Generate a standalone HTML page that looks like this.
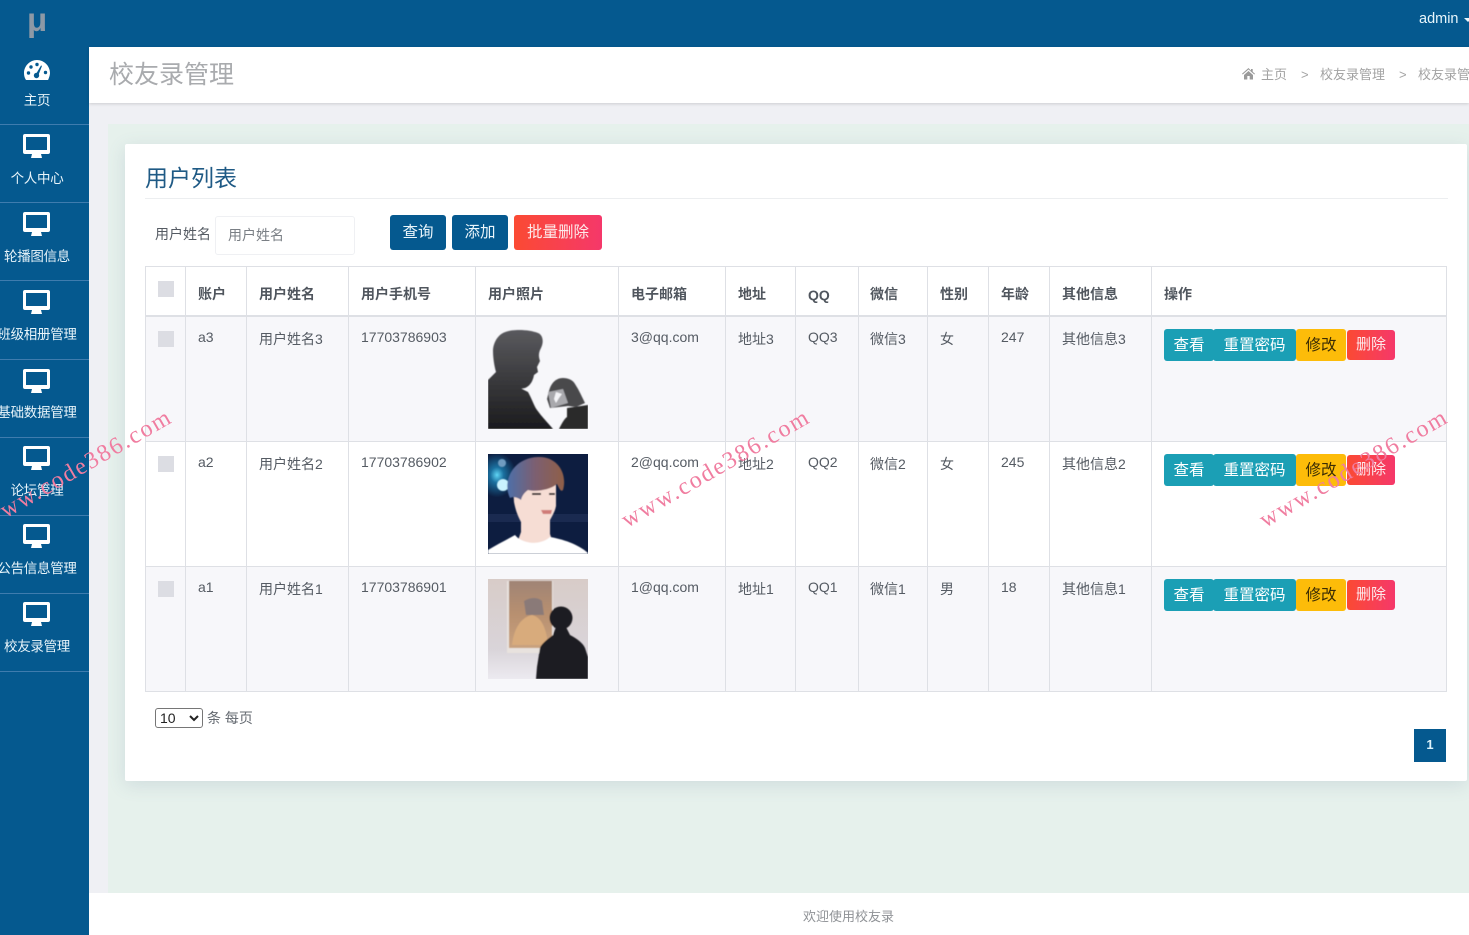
<!DOCTYPE html>
<html lang="zh"><head><meta charset="utf-8"><title>校友录管理</title>
<style>
html,body{margin:0;padding:0;width:1469px;height:935px;overflow:hidden;background:#eff0f4}
body{position:relative;font-family:"Liberation Sans","Noto Sans CJK SC",sans-serif;font-size:14px;color:#555b63}
div,span,svg,select{position:absolute}
.t{white-space:nowrap;line-height:20px}
.m{left:-20px;width:114px;margin-top:1px;text-align:center;color:#e8f4fa;font-size:13.5px;line-height:20px;white-space:nowrap;letter-spacing:-.3px}
.m span{position:static}
.sep{left:0;width:89px;height:1px;background:#3f7cae}
.mon{left:23px;width:28px;height:28px}
.v{width:1px;background:#dee0e5;top:266px;height:426px}
.h{left:145px;width:1302px;background:#dee0e5;height:1px}
.bg{left:146px;width:1300px;height:124px;background:#f7f7fa}
.th{top:284px;font-weight:bold;color:#50565e;font-size:14px;line-height:20px;white-space:nowrap}
.cb{left:158px;width:16px;height:16px;background:#dcdde3}
.btn{height:32px;line-height:33px;text-align:center;border-radius:3px;font-size:15.5px}
.b1{left:1164px;width:50px;background:#1b9fb5;color:#fff}
.b2{left:1213px;width:83px;background:#1b9fb5;color:#fff}
.b3{left:1296px;width:50px;background:#fdbc09;color:#3a2c05}
.b4{left:1347px;width:48px;height:30px;line-height:30px;font-size:15px;background:linear-gradient(90deg,#fb4a33,#f5386a);color:#fde9ec}
.wm{font-family:"Liberation Serif",serif;font-size:24px;letter-spacing:1.9px;color:#f07da0;line-height:30px;white-space:nowrap;transform:rotate(-30deg);transform-origin:0 100%}
</style></head><body>
<div style="left:0;top:0;width:1469px;height:47px;background:#05598f"></div>
<div style="left:0;top:0;width:89px;height:935px;background:#05598f"></div>
<div class="t" style="left:27px;top:1px;font-size:33px;line-height:38px;font-weight:bold;color:#8d99a6">μ</div>
<div class="t" style="left:1419px;top:9px;color:#e8f6fc;font-size:14.5px">admin</div>
<div style="left:1464px;top:18px;width:0;height:0;border:4px solid transparent;border-top:4px solid #e8f6fc;border-bottom:0"></div>

<svg style="left:23px;top:59px" width="28" height="22" viewBox="0 0 28 22"><path fill="#fff" d="M14 1C7 1 1 7 1 14c0 2.500.6 4.700 1.600 6.400.2.400.6.600 1 .600h20.800c.4 0 .8-.2 1-.6C25.900 18.700 27 16.500 27 14 27 7 21 1 14 1z"/><g fill="#05598f"><circle cx="5.500" cy="14" r="1.700"/><circle cx="8" cy="8" r="1.700"/><circle cx="14" cy="5.500" r="1.700"/><circle cx="22.500" cy="13.500" r="1.700"/><circle cx="13.500" cy="16.500" r="2.700"/><path d="M13 15l5-8.500 1 .4-3.500 9z"/></g></svg>
<div class="m" style="top:90px"><span>主页</span></div><div class="sep" style="top:124px"></div>

<svg class="mon" style="top:133px" viewBox="0 0 28 28"><path fill="#fff" d="M2 1h23a2 2 0 0 1 2 2v16a2 2 0 0 1-2 2H18l1 4H8l1-4H2a2 2 0 0 1-2-2V3a2 2 0 0 1 2-2zm1 3v13h21V4z"/></svg>
<div class="m" style="top:168px"><span>个人中心</span></div><div class="sep" style="top:202px"></div>

<svg class="mon" style="top:211px" viewBox="0 0 28 28"><path fill="#fff" d="M2 1h23a2 2 0 0 1 2 2v16a2 2 0 0 1-2 2H18l1 4H8l1-4H2a2 2 0 0 1-2-2V3a2 2 0 0 1 2-2zm1 3v13h21V4z"/></svg>
<div class="m" style="top:246px"><span>轮播图信息</span></div><div class="sep" style="top:280px"></div>

<svg class="mon" style="top:289px" viewBox="0 0 28 28"><path fill="#fff" d="M2 1h23a2 2 0 0 1 2 2v16a2 2 0 0 1-2 2H18l1 4H8l1-4H2a2 2 0 0 1-2-2V3a2 2 0 0 1 2-2zm1 3v13h21V4z"/></svg>
<div class="m" style="top:324px"><span>班级相册管理</span></div><div class="sep" style="top:359px"></div>

<svg class="mon" style="top:368px" viewBox="0 0 28 28"><path fill="#fff" d="M2 1h23a2 2 0 0 1 2 2v16a2 2 0 0 1-2 2H18l1 4H8l1-4H2a2 2 0 0 1-2-2V3a2 2 0 0 1 2-2zm1 3v13h21V4z"/></svg>
<div class="m" style="top:402px"><span>基础数据管理</span></div><div class="sep" style="top:437px"></div>

<svg class="mon" style="top:445px" viewBox="0 0 28 28"><path fill="#fff" d="M2 1h23a2 2 0 0 1 2 2v16a2 2 0 0 1-2 2H18l1 4H8l1-4H2a2 2 0 0 1-2-2V3a2 2 0 0 1 2-2zm1 3v13h21V4z"/></svg>
<div class="m" style="top:480px"><span>论坛管理</span></div><div class="sep" style="top:515px"></div>

<svg class="mon" style="top:523px" viewBox="0 0 28 28"><path fill="#fff" d="M2 1h23a2 2 0 0 1 2 2v16a2 2 0 0 1-2 2H18l1 4H8l1-4H2a2 2 0 0 1-2-2V3a2 2 0 0 1 2-2zm1 3v13h21V4z"/></svg>
<div class="m" style="top:558px"><span>公告信息管理</span></div><div class="sep" style="top:593px"></div>

<svg class="mon" style="top:601px" viewBox="0 0 28 28"><path fill="#fff" d="M2 1h23a2 2 0 0 1 2 2v16a2 2 0 0 1-2 2H18l1 4H8l1-4H2a2 2 0 0 1-2-2V3a2 2 0 0 1 2-2zm1 3v13h21V4z"/></svg>
<div class="m" style="top:636px"><span>校友录管理</span></div><div class="sep" style="top:671px"></div>

<div style="left:89px;top:47px;width:1380px;height:56px;background:#fff;box-shadow:0 1px 3px rgba(0,0,0,.15)"></div>
<div class="t" style="left:109px;top:59px;font-size:25px;line-height:32px;color:#a9abae">校友录管理</div>
<svg style="left:1242px;top:68px" width="13" height="12" viewBox="0 0 13 12"><path fill="#9a9a9a" d="M6.500 0L0 5.700l.7.800L6.500 1.500l5.800 5 .7-.8-2.300-2V1H9v1.600zM2 7v4.500h3.300V8h2.400v3.500H11V7L6.500 3z"/></svg>
<div class="t" style="left:1261px;top:65px;font-size:13px;color:#a3a3a3">主页</div>
<div class="t" style="left:1301px;top:65px;font-size:13px;color:#a3a3a3">&gt;</div>
<div class="t" style="left:1320px;top:65px;font-size:13px;color:#a3a3a3">校友录管理</div>
<div class="t" style="left:1399px;top:65px;font-size:13px;color:#a3a3a3">&gt;</div>
<div class="t" style="left:1418px;top:65px;font-size:13px;color:#a3a3a3">校友录管理</div>

<div style="left:108px;top:124px;width:1361px;height:769px;background:#e6f1ec"></div>
<div style="left:89px;top:893px;width:1380px;height:42px;background:#fff"></div>
<div class="t" style="left:803px;top:907px;font-size:13px;color:#8f9296">欢迎使用校友录</div>

<div style="left:125px;top:144px;width:1342px;height:637px;background:#fff;border-radius:2px;box-shadow:0 4px 18px rgba(90,110,150,.16)"></div>
<div class="t" style="left:145px;top:163px;font-size:23px;line-height:30px;color:#1f5a85">用户列表</div>
<div style="left:145px;top:198px;width:1303px;height:1px;background:#eceef0"></div>
<div class="t" style="left:155px;top:224px;color:#555b63">用户姓名</div>
<div style="left:215px;top:216px;width:138px;height:37px;border:1px solid #eff0f3;border-radius:3px"></div>
<div class="t" style="left:228px;top:225px;color:#7a7f85">用户姓名</div>
<div class="btn" style="left:390px;top:215px;width:56px;height:35px;line-height:35px;background:#05598f;color:#eaf5fb">查询</div>
<div class="btn" style="left:452px;top:215px;width:56px;height:35px;line-height:35px;background:#05598f;color:#eaf5fb">添加</div>
<div class="btn" style="left:514px;top:215px;width:88px;height:35px;line-height:35px;background:linear-gradient(90deg,#fb4a33,#f5386a);color:#fdeaea">批量删除</div>

<div class="bg" style="top:317px"></div>
<div class="bg" style="top:567px"></div>
<div class="h" style="top:266px"></div>
<div class="h" style="top:315px;height:2px"></div>
<div class="h" style="top:441px"></div>
<div class="h" style="top:566px"></div>
<div class="h" style="top:691px"></div>
<div class="v" style="left:145px"></div><div class="v" style="left:185px"></div><div class="v" style="left:246px"></div><div class="v" style="left:348px"></div><div class="v" style="left:475px"></div><div class="v" style="left:618px"></div><div class="v" style="left:725px"></div><div class="v" style="left:795px"></div><div class="v" style="left:858px"></div><div class="v" style="left:927px"></div><div class="v" style="left:988px"></div><div class="v" style="left:1049px"></div><div class="v" style="left:1151px"></div><div class="v" style="left:1446px"></div>

<div class="cb" style="top:281px"></div>
<div class="th" style="left:198px">账户</div><div class="th" style="left:259px">用户姓名</div><div class="th" style="left:361px">用户手机号</div><div class="th" style="left:488px">用户照片</div><div class="th" style="left:631px">电子邮箱</div><div class="th" style="left:738px">地址</div><div class="th" style="left:808px;top:285px">QQ</div><div class="th" style="left:870px">微信</div><div class="th" style="left:940px">性别</div><div class="th" style="left:1001px">年龄</div><div class="th" style="left:1062px">其他信息</div><div class="th" style="left:1164px">操作</div>

<!-- row 1 -->
<div class="cb" style="top:331px"></div>
<div class="t" style="left:198px;top:327px">a3</div><div class="t" style="left:259px;top:329px">用户姓名3</div><div class="t" style="left:361px;top:327px">17703786903</div><div class="t" style="left:631px;top:327px">3@qq.com</div><div class="t" style="left:738px;top:329px">地址3</div><div class="t" style="left:808px;top:327px">QQ3</div><div class="t" style="left:870px;top:329px">微信3</div><div class="t" style="left:940px;top:329px">女</div><div class="t" style="left:1001px;top:327px">247</div><div class="t" style="left:1062px;top:329px">其他信息3</div>
<div class="btn b1" style="top:329px">查看</div><div class="btn b2" style="top:329px">重置密码</div><div class="btn b3" style="top:329px">修改</div><div class="btn b4" style="top:330px">删除</div>
<svg style="left:488px;top:329px" width="100" height="100" viewBox="0 0 100 100"><defs><linearGradient id="g1" x1="0" y1="0" x2="0" y2="1"><stop offset="0" stop-color="#5a5a5e"/><stop offset=".5" stop-color="#3a3a3d"/><stop offset="1" stop-color="#1c1c1e"/></linearGradient><filter id="s"><feGaussianBlur stdDeviation=".6"/></filter></defs><rect width="100" height="100" fill="#f7f7fa"/><g filter="url(#s)"><path fill="url(#g1)" d="M0 100V51L8 43C6 36 5 28 5 22 5 15 9 7 15 4 22 0 40 0 50 4 55 6 56 13 53 19 51 23 50 26 52 32L49 38 50 43 46 46C45 52 42 57 37 59 33 60 30 60 27 57 22 53 20 51 19 50 28 57 36 61 40 63 44 70 46 77 49 81 54 88 60 94 65 100z"/><path fill="#2a2a2c" d="M79 79 100 76V100H71C73 96 76 90 79 88z"/><path fill="#48484b" d="M61 62C63 54 68 49 75 49 80 49 85 51 87 55 91 61 94 68 97 74L88 78 80 77 62 79 59 70z"/><path fill="#a9a9ad" d="M60 63l15-3 5 14-17 5z"/><path fill="#f4f4f7" d="M68 63l6 2-3 4-3 5-2-4z"/></g></svg>

<!-- row 2 -->
<div class="cb" style="top:456px"></div>
<div class="t" style="left:198px;top:452px">a2</div><div class="t" style="left:259px;top:454px">用户姓名2</div><div class="t" style="left:361px;top:452px">17703786902</div><div class="t" style="left:631px;top:452px">2@qq.com</div><div class="t" style="left:738px;top:454px">地址2</div><div class="t" style="left:808px;top:452px">QQ2</div><div class="t" style="left:870px;top:454px">微信2</div><div class="t" style="left:940px;top:454px">女</div><div class="t" style="left:1001px;top:452px">245</div><div class="t" style="left:1062px;top:454px">其他信息2</div>
<div class="btn b1" style="top:454px">查看</div><div class="btn b2" style="top:454px">重置密码</div><div class="btn b3" style="top:454px">修改</div><div class="btn b4" style="top:455px">删除</div>
<svg style="left:488px;top:454px" width="100" height="100" viewBox="0 0 100 100"><defs><radialGradient id="g2" cx="15%" cy="30%" r="32%"><stop offset="0" stop-color="#5fd4f4"/><stop offset=".35" stop-color="#1a6f9e"/><stop offset="1" stop-color="#0d1d40"/></radialGradient><linearGradient id="g3" x1="0" y1="0" x2="1" y2="0"><stop offset="0" stop-color="#4d6fa8"/><stop offset=".5" stop-color="#7d5f70"/><stop offset="1" stop-color="#8f5f48"/></linearGradient><filter id="s2"><feGaussianBlur stdDeviation=".6"/></filter></defs><rect width="100" height="100" fill="#0d1d40"/><rect width="60" height="70" fill="url(#g2)"/><rect y="60" width="100" height="8" fill="#1a2a50"/><g filter="url(#s2)"><circle cx="15" cy="31" r="6" fill="#c9f3ff"/><circle cx="14" cy="9" r="4" fill="#6f9cc0"/><path fill="#f6ddd4" d="M25 31H68V52C67 58 63 64 62 66L62 80 66 92H28L33 78 33 68C30 62 28 58 26 48z"/><path fill="#fff" d="M0 96C8 91 18 86 27 81 34 90 52 92 62 83 74 85 90 90 100 99V100H0z"/><path fill="url(#g3)" d="M22 44C14 28 24 4 50 3 68 2 80 18 75 36 73 38 72 36 69 30 62 36 48 38 40 36 36 39 34 42 33 46 30 44 26 42 22 44z"/><path fill="#d07c78" d="M53 56h11l-1 4h-8z"/><path fill="#2a2326" d="M44 39h9v2h-9zM61 39h6v2h-6z"/></g></svg>

<!-- row 3 -->
<div class="cb" style="top:581px"></div>
<div class="t" style="left:198px;top:577px">a1</div><div class="t" style="left:259px;top:579px">用户姓名1</div><div class="t" style="left:361px;top:577px">17703786901</div><div class="t" style="left:631px;top:577px">1@qq.com</div><div class="t" style="left:738px;top:579px">地址1</div><div class="t" style="left:808px;top:577px">QQ1</div><div class="t" style="left:870px;top:579px">微信1</div><div class="t" style="left:940px;top:579px">男</div><div class="t" style="left:1001px;top:577px">18</div><div class="t" style="left:1062px;top:579px">其他信息1</div>
<div class="btn b1" style="top:579px">查看</div><div class="btn b2" style="top:579px">重置密码</div><div class="btn b3" style="top:579px">修改</div><div class="btn b4" style="top:580px">删除</div>
<svg style="left:488px;top:579px" width="100" height="100" viewBox="0 0 100 100"><defs><linearGradient id="g4" x1="0" y1="0" x2="0" y2="1"><stop offset="0" stop-color="#d8ccc8"/><stop offset=".7" stop-color="#d9d4d9"/><stop offset="1" stop-color="#eceaf0"/></linearGradient><linearGradient id="g5" x1="0" y1="0" x2="0" y2="1"><stop offset="0" stop-color="#a08475"/><stop offset=".5" stop-color="#b89070"/><stop offset="1" stop-color="#c9a27f"/></linearGradient><filter id="s3"><feGaussianBlur stdDeviation=".6"/></filter></defs><rect width="100" height="100" fill="url(#g4)"/><g filter="url(#s3)"><rect x="19" y="2" width="46" height="72" fill="#e8e2de"/><rect x="21" y="2" width="43" height="67" fill="url(#g5)"/><path fill="#d8ab7c" d="M24 66C26 48 34 38 44 36 52 38 58 46 60 66z"/><path fill="#8a7a78" d="M36 22c6-4 14-4 18 0l2 14H38z"/><circle cx="73" cy="39" r="11.500" fill="#1d1b20"/><path fill="#1d1b20" d="M48 100 49 88 52 69C54 64 60 60 65 56L68 48H78L82 56C88 59 95 64 97 69L100 78V100z"/></g></svg>

<select style="left:155px;top:708px;width:48px;height:20px;font-family:'Liberation Sans',sans-serif;font-size:14px;color:#222;background:#fff;border:1px solid #767676;border-radius:3px;padding:0"><option>10</option></select>
<div class="t" style="left:207px;top:708px;color:#666b72">条 每页</div>
<div style="left:1414px;top:729px;width:32px;height:33px;background:#05598f;color:#dff3fb;text-align:center;line-height:32px;font-weight:bold;font-size:13px">1</div>

<div class="wm" style="left:-7px;top:505px">www.code386.com</div>
<div class="wm" style="left:631px;top:505px">www.code386.com</div>
<div class="wm" style="left:1269px;top:505px">www.code386.com</div>
</body></html>
